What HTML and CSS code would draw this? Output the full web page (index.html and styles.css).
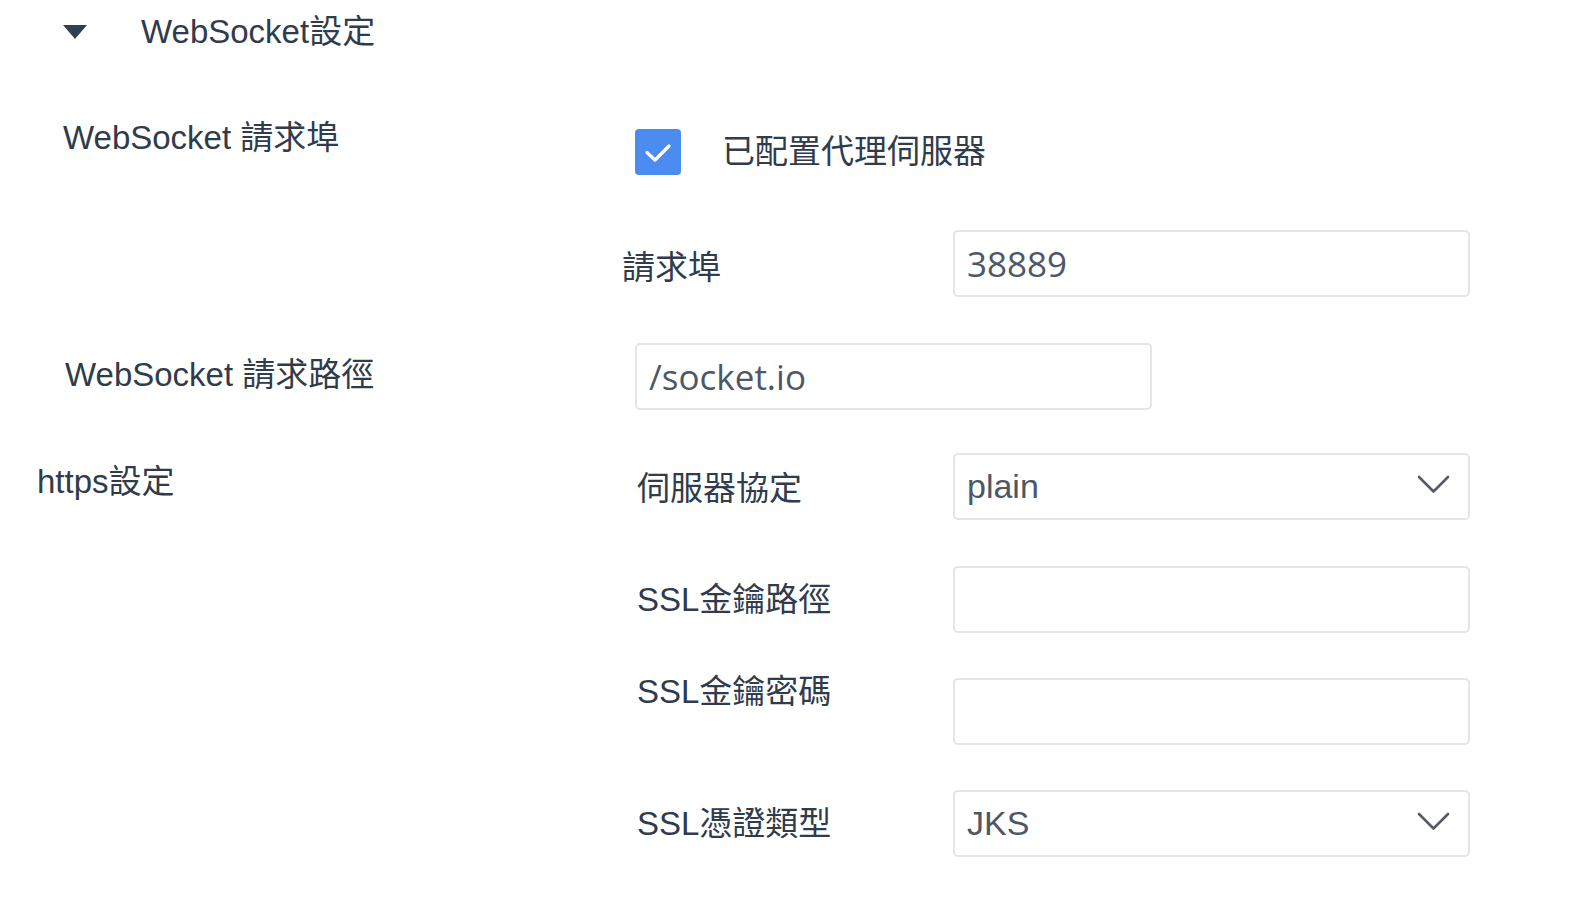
FILE: index.html
```html
<!DOCTYPE html>
<html lang="zh-Hant">
<head>
<meta charset="utf-8">
<title>WebSocket設定</title>
<link rel="stylesheet" href="styles.css">
</head>
<body>
<div class="page">
  <div class="header">
    <span class="caret"></span>
    <span class="title">WebSocket設定</span>
  </div>

  <div class="row row-a">
    <div class="left"><span class="label label-ws">WebSocket 請求埠</span></div>
    <div class="right">
      <div class="check-row">
        <span class="checkbox">
          <svg width="46" height="46" viewBox="0 0 46 46"><path d="M12 23.5 L20 31 L34 17" fill="none" stroke="#fff" stroke-width="3.2" stroke-linecap="round" stroke-linejoin="round"/></svg>
        </span>
        <span class="label">已配置代理伺服器</span>
      </div>
      <div class="sub sub-port">
        <span class="label sub-label port-label">請求埠</span>
        <div class="field text">38889</div>
      </div>
    </div>
  </div>

  <div class="row row-b">
    <div class="left"><span class="label label-path">WebSocket 請求路徑</span></div>
    <div class="right">
      <div class="field text">/socket.io</div>
    </div>
  </div>

  <div class="row row-c">
    <div class="left"><span class="label label-https">https設定</span></div>
    <div class="right">
      <div class="sub">
        <span class="label sub-label lbl-proto">伺服器協定</span>
        <div class="field select"><span>plain</span>
          <svg class="chev" width="33" height="19" viewBox="0 0 33 19"><polyline points="2,2 16.5,16.5 31,2" fill="none" stroke="#555b66" stroke-width="2.6" stroke-linecap="round" stroke-linejoin="round"/></svg>
        </div>
      </div>
      <div class="sub gap46">
        <span class="label sub-label">SSL金鑰路徑</span>
        <div class="field text"></div>
      </div>
      <div class="sub gap45 top">
        <span class="label sub-label lbl-pwd">SSL金鑰密碼</span>
        <div class="field text"></div>
      </div>
      <div class="sub gap45">
        <span class="label sub-label">SSL憑證類型</span>
        <div class="field select"><span>JKS</span>
          <svg class="chev" width="33" height="19" viewBox="0 0 33 19"><polyline points="2,2 16.5,16.5 31,2" fill="none" stroke="#555b66" stroke-width="2.6" stroke-linecap="round" stroke-linejoin="round"/></svg>
        </div>
      </div>
    </div>
  </div>
</div>
</body>
</html>
```

FILE: styles.css
```css
html, body {
  margin: 0;
  padding: 0;
  background: #ffffff;
}

body {
  font-family: "Liberation Sans", "Noto Sans CJK TC", sans-serif;
  color: #303b4b;
  width: 1576px;
  height: 902px;
  overflow: hidden;
}

.page {
  display: flex;
  flex-direction: column;
}

.header {
  display: flex;
  align-items: center;
  height: 63px;
  padding-left: 63px;
}

.caret {
  width: 0;
  height: 0;
  border-left: 12px solid transparent;
  border-right: 12px solid transparent;
  border-top: 14px solid #333f52;
  margin-top: 1px;
}

.title {
  margin-left: 54px;
  font-size: 33px;
  line-height: 40px;
}

.label {
  font-size: 33px;
  line-height: 40px;
  white-space: nowrap;
}

.row {
  display: flex;
}

.left {
  width: 635px;
  flex: none;
}

.right {
  display: flex;
  flex-direction: column;
}

/* Row A */
.row-a {
  margin-top: 52px;
}

.label-ws {
  display: block;
  padding-left: 63px;
  line-height: 46px;
}

.row-a .right {
  padding-top: 14px;
}

.check-row {
  display: flex;
  align-items: center;
  height: 46px;
  gap: 41px;
}

.checkbox {
  width: 46px;
  height: 46px;
  border-radius: 4px;
  background: #4a8cf0;
  display: block;
}

.checkbox svg {
  display: block;
}

.sub {
  display: flex;
  align-items: center;
}

.sub-port {
  margin-top: 55px;
}

.sub-label {
  width: 316px;
  padding-left: 2px;
  flex: none;
}

.port-label {
  margin-left: -13px;
  width: 331px;
  padding-left: 0;
  padding-top: 9px;
}

/* fields */
.field {
  box-sizing: border-box;
  width: 517px;
  height: 67px;
  border: 2px solid #e2e5ec;
  border-radius: 5px;
  background: #fff;
  color: #4e5766;
  display: flex;
  align-items: center;
  white-space: nowrap;
}

.field.text {
  font-family: "Open Sans", "Liberation Sans", sans-serif;
  font-size: 35px;
  padding-left: 12px;
}

.field.select {
  font-family: "Liberation Sans", sans-serif;
  font-size: 34px;
  padding-left: 12px;
  padding-right: 18px;
  justify-content: space-between;
}

.chev {
  display: block;
  margin-top: -4px;
}

/* Row B */
.row-b {
  margin-top: 46px;
  align-items: center;
}

.label-path {
  display: block;
  padding-left: 65px;
  margin-top: -4px;
}

/* Row C */
.row-c {
  margin-top: 43px;
}

.label-https {
  display: block;
  padding-left: 37px;
  line-height: 58px;
}

.lbl-proto {
  padding-top: 5px;
}

.gap46 {
  margin-top: 46px;
}

.gap45 {
  margin-top: 45px;
}

.sub.top {
  align-items: flex-start;
}

.lbl-pwd {
  margin-top: -6px;
}
```
